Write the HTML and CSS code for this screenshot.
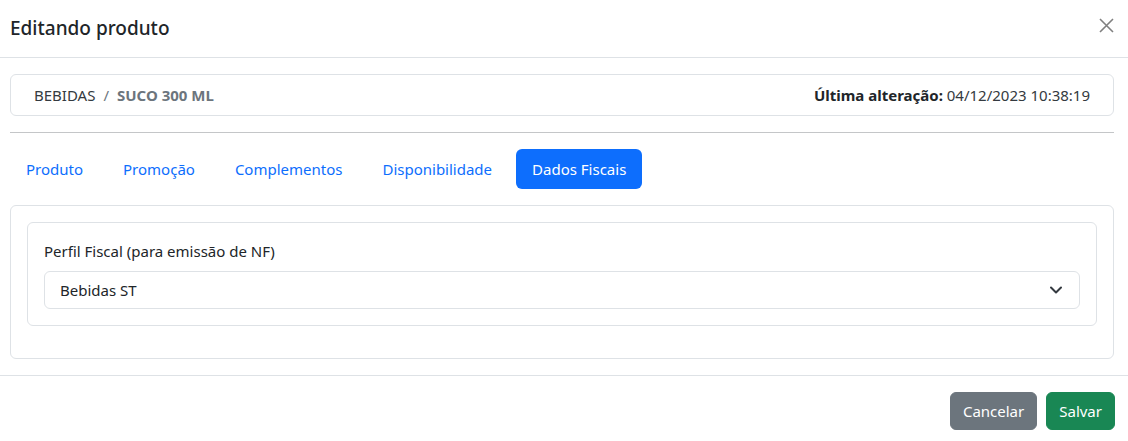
FILE: index.html
```html
<!DOCTYPE html>
<html lang="pt-BR">
<head>
<meta charset="utf-8">
<title>Editando produto</title>
<link rel="stylesheet" href="styles.css">
</head>
<body>
<div class="modal">
  <div class="modal-header">
    <h5 class="modal-title">Editando produto</h5>
    <button class="btn-close" type="button" aria-label="Fechar">
      <svg width="15" height="15" viewBox="0 0 15 15"><path d="M1 1 L14 14 M14 1 L1 14" stroke="#808080" stroke-width="1.6" fill="none"/></svg>
    </button>
  </div>
  <div class="modal-body">
    <div class="crumb-card">
      <div class="crumbs">
        <span class="crumb">BEBIDAS</span><span class="crumb-sep">/</span><span class="crumb-active">SUCO 300 ML</span>
      </div>
      <div class="last-change"><strong>Última alteração:</strong> 04/12/2023 10:38:19</div>
    </div>
    <hr class="divider">
    <nav class="nav-pills">
      <a class="nav-link">Produto</a>
      <a class="nav-link">Promoção</a>
      <a class="nav-link">Complementos</a>
      <a class="nav-link">Disponibilidade</a>
      <a class="nav-link active">Dados Fiscais</a>
    </nav>
    <div class="tab-card">
      <div class="inner-card">
        <label class="form-label">Perfil Fiscal (para emissão de NF)</label>
        <div class="form-select">
          <span>Bebidas ST</span>
          <svg class="chevron" width="12" height="8" viewBox="0 0 12 8"><path d="M1 1.5 L6 6.5 L11 1.5" stroke="#343a40" stroke-width="2" fill="none" stroke-linecap="round" stroke-linejoin="round"/></svg>
        </div>
      </div>
    </div>
  </div>
  <div class="modal-footer">
    <button class="btn btn-secondary" type="button">Cancelar</button>
    <button class="btn btn-success" type="button">Salvar</button>
  </div>
</div>
</body>
</html>
```
FILE: styles.css
```css
* { box-sizing: border-box; }
html, body { margin: 0; padding: 0; background: #fff; }
body {
  font-family: "Noto Sans", "Open Sans", sans-serif;
  font-size: 15px;
  line-height: 24px;
  color: #212529;
}
.modal { width: 1128px; }
.modal-header {
  display: flex;
  align-items: flex-start;
  justify-content: space-between;
  padding: 13px 14px 14px 10px;
  border-bottom: 1px solid #dee2e6;
}
.modal-title {
  margin: 0;
  font-size: 19px;
  font-weight: 500;
  line-height: 30px;
}
.btn-close {
  margin-top: 5px;
  padding: 0;
  border: 0;
  background: transparent;
  width: 15px;
  height: 15px;
  display: block;
}
.btn-close svg { display: block; }
.modal-body { padding: 16px 14px 16px 10px; }
.crumb-card {
  display: flex;
  justify-content: space-between;
  align-items: center;
  border: 1px solid #dee2e6;
  border-radius: 6px;
  padding: 8px 23px;
}
.crumbs { display: flex; }
.crumb { color: #343a40; }
.crumb-sep { color: #6c757d; padding: 0 8px; }
.crumb-active { color: #6c757d; font-weight: 700; }
.last-change { color: #343a40; }
.last-change strong { color: #212529; font-weight: 700; }
.divider {
  margin: 16px 0;
  border: 0;
  border-top: 1px solid #c4c6c8;
  height: 0;
}
.nav-pills { display: flex; gap: 8px; }
.nav-link {
  display: block;
  padding: 8px 16px;
  color: #0d6efd;
  border-radius: 6px;
  line-height: 24px;
}
.nav-link.active { background: #0d6efd; color: #fff; }
.tab-card {
  margin-top: 16px;
  border: 1px solid #dee2e6;
  border-radius: 6px;
  padding: 16px;
}
.inner-card {
  border: 1px solid #dee2e6;
  border-radius: 6px;
  padding: 16px;
  margin-bottom: 16px;
}
.form-label { display: block; margin-bottom: 8px; }
.form-select {
  display: flex;
  align-items: center;
  justify-content: space-between;
  height: 38px;
  padding: 0 17px 0 15px;
  border: 1px solid #dee2e6;
  border-radius: 6px;
  color: #212529;
}
.chevron { display: block; }
.modal-footer {
  display: flex;
  justify-content: flex-end;
  gap: 9px;
  padding: 16px 13px 11px;
  border-top: 1px solid #dee2e6;
}
.btn {
  font-family: inherit;
  font-size: 15px;
  line-height: 24px;
  padding: 6px 12px;
  border: 1px solid transparent;
  border-radius: 6px;
  color: #fff;
}
.btn-secondary { background: #6c757d; border-color: #6c757d; }
.btn-success { background: #198754; border-color: #198754; }
```
